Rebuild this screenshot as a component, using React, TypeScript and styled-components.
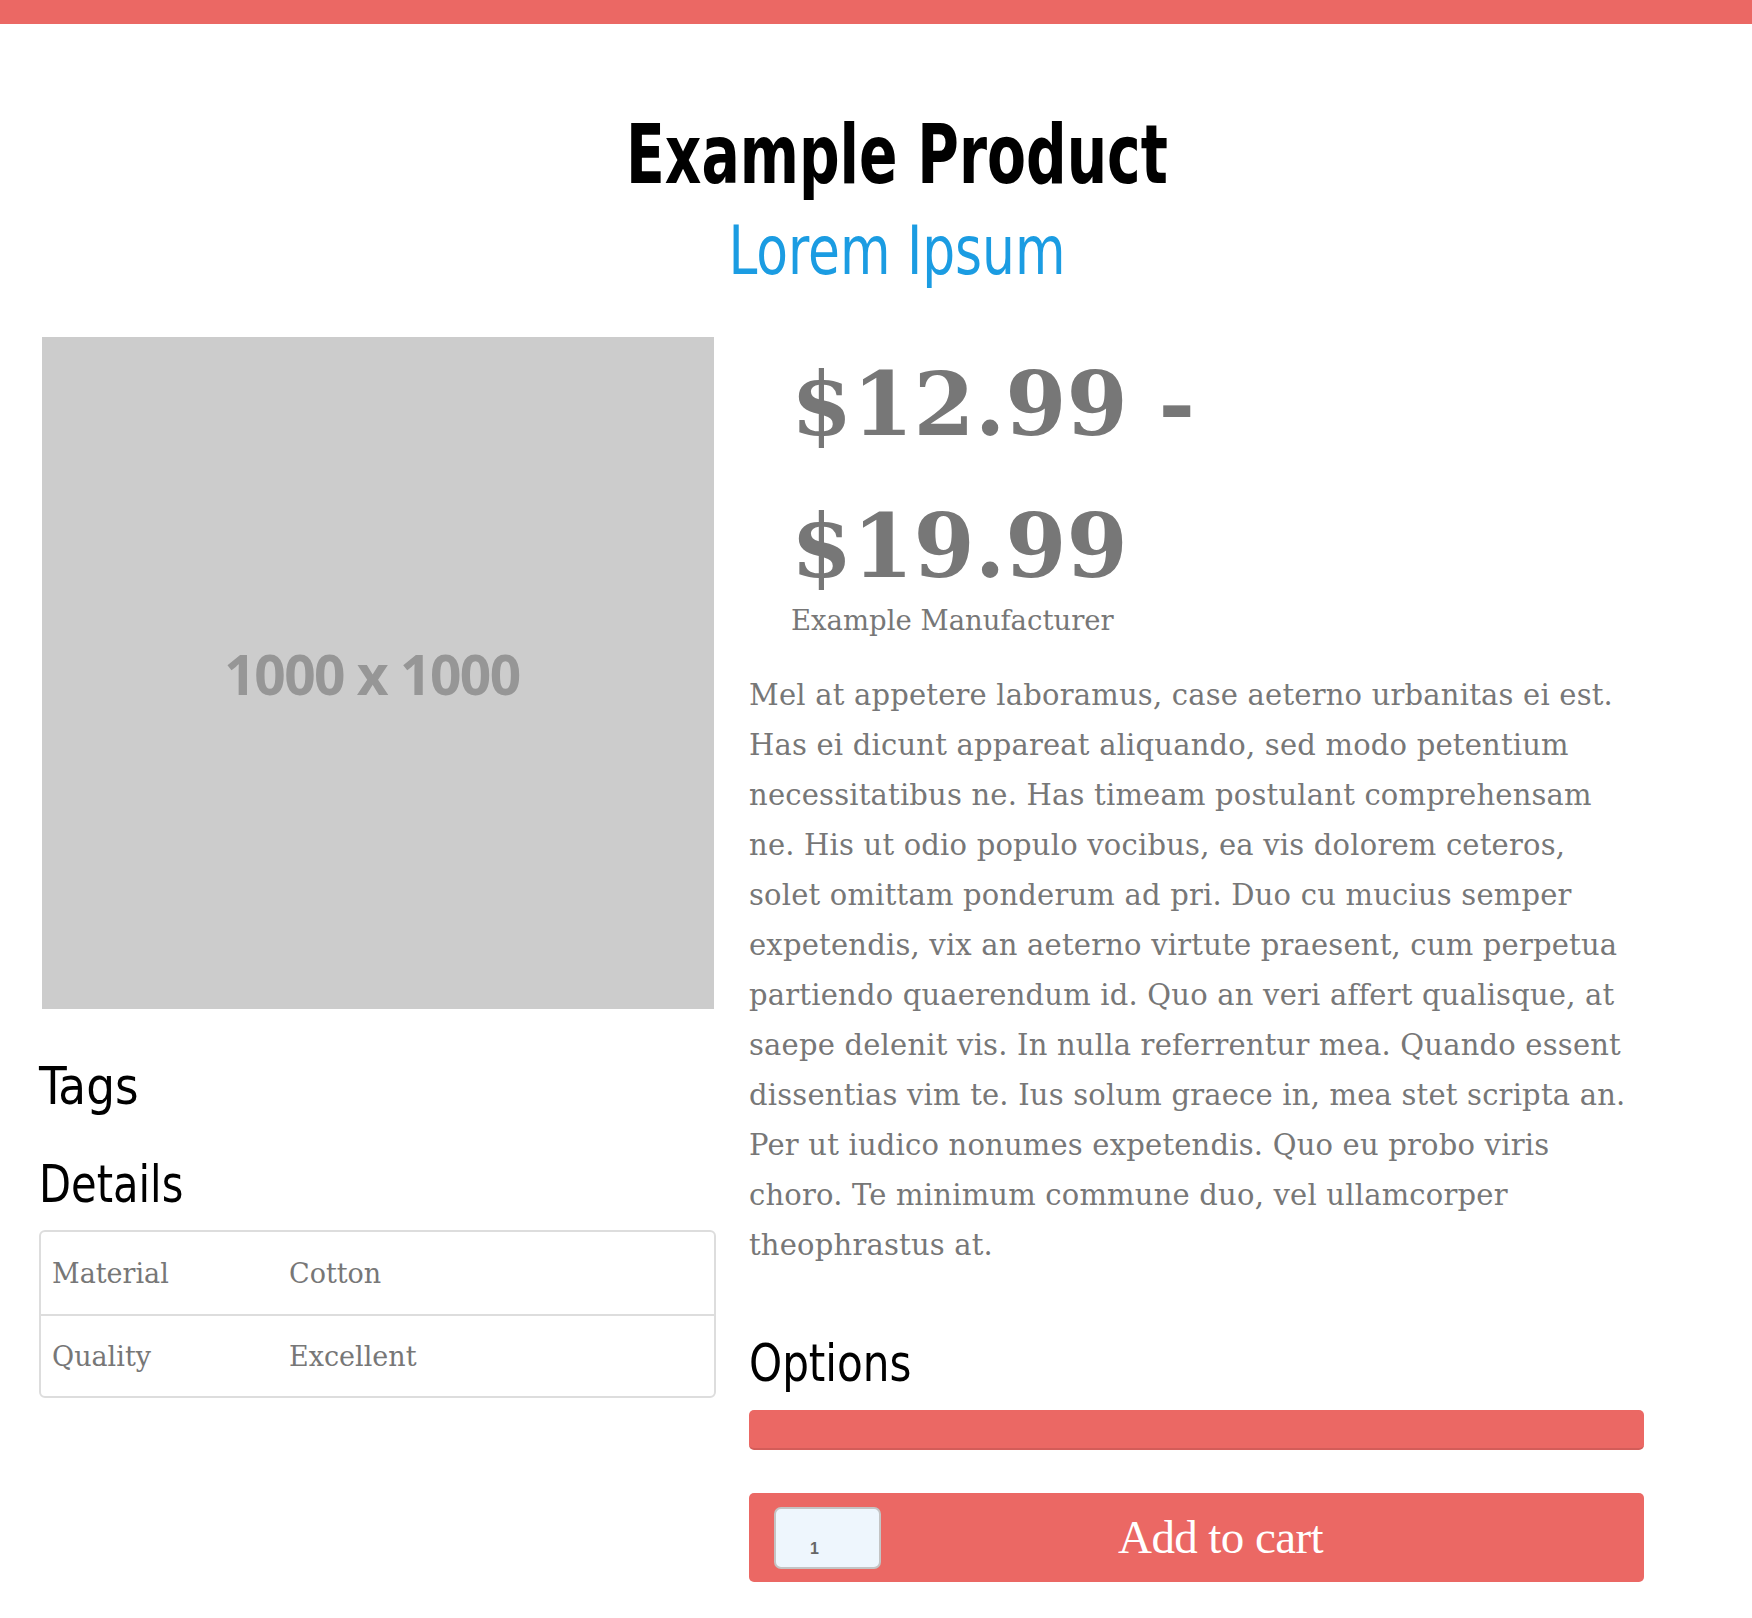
import React from "react";
import styled, { createGlobalStyle } from "styled-components";

const GlobalStyle = createGlobalStyle`
  html, body { margin: 0; padding: 0; background: #ffffff; }
  body { font-family: "DejaVu Serif", Georgia, serif; color: #777777; }
  * { box-sizing: border-box; }
`;

const headingFont = `"DejaVu Sans Condensed", "DejaVu Sans", sans-serif`;

const TopBar = styled.div`
  height: 24px;
  background: #eb6864;
`;

const Page = styled.main`
  padding: 90px 0 40px 39px;
`;

const Header = styled.header`
  padding-left: 3px;
  text-align: center;
`;

const Title = styled.h1`
  margin: 0;
  font-family: ${headingFont};
  font-stretch: condensed;
  font-weight: 700;
  font-size: 82px;
  line-height: 82px;
  color: #000000;
`;

const Subtitle = styled.h2`
  margin: 22px 0 0;
  font-family: ${headingFont};
  font-stretch: condensed;
  font-weight: 400;
  font-size: 67px;
  line-height: 67px;
  color: #1b9ce2;
`;

/* News Cycle is narrower than any installed sans: squeeze the glyphs horizontally */
const Narrow = styled.span<{ $sx: number; $origin?: string }>`
  display: inline-block;
  white-space: nowrap;
  transform: scaleX(${(p) => p.$sx});
  transform-origin: ${(p) => p.$origin ?? "center"};
`;

const Row = styled.div`
  display: flex;
  align-items: flex-start;
  gap: 33px;
  margin-top: 52px;
`;

const LeftCol = styled.section`
  width: 677px;
  display: flex;
  flex-direction: column;
`;

const RightCol = styled.section`
  width: 895px;
  display: flex;
  flex-direction: column;
`;

const Placeholder = styled.div`
  width: 672px;
  height: 672px;
  margin-left: 3px;
  background: #cccccc;
  display: flex;
  align-items: center;
  justify-content: center;
  font-family: "Open Sans", "Noto Sans", sans-serif;
  font-weight: 700;
  font-size: 55px;
  letter-spacing: -1.5px;
  color: #969696;
  padding-right: 12px;
`;

const SectionTitle = styled.h3<{ $mt: number }>`
  margin: ${(p) => p.$mt}px 0 0;
  font-family: ${headingFont};
  font-stretch: condensed;
  font-weight: 400;
  font-size: 52px;
  line-height: 52px;
  color: #000000;
`;

const DetailsTable = styled.div`
  margin-top: 20px;
  border: 2px solid #dddddd;
  border-radius: 6px;
`;

const DetailRow = styled.div<{ $first?: boolean }>`
  display: grid;
  grid-template-columns: 237px 1fr;
  align-items: center;
  height: 82px;
  padding-left: 11px;
  border-top: ${(p) => (p.$first ? "none" : "2px solid #dddddd")};
  font-size: 27px;
  color: #777777;
`;

const PriceBlock = styled.div`
  padding-left: 42px;
  margin-top: -4px;
`;

const Price = styled.h1`
  margin: 0;
  max-width: 520px;
  font-family: "DejaVu Serif", Georgia, serif;
  font-weight: 700;
  font-size: 88px;
  line-height: 142px;
  color: #777777;
`;

const Manufacturer = styled.div`
  margin-top: -10px;
  font-size: 27.5px;
  line-height: 27px;
  color: #777777;
`;

const Description = styled.p`
  margin: 36px 0 0;
  font-size: 29px;
  line-height: 50px;
  letter-spacing: 0.2px;
  color: #777777;
`;

const DescLine = styled.span`
  display: block;
  white-space: nowrap;
`;

const OptionsBar = styled.div`
  margin-top: 21px;
  height: 40px;
  background: #eb6864;
  border-radius: 5px;
  border-bottom: 2px solid #d35d59;
`;

const CartButton = styled.button`
  margin-top: 43px;
  height: 89px;
  width: 100%;
  display: flex;
  align-items: center;
  padding: 0 25px;
  background: #eb6864;
  border: none;
  border-radius: 5px;
  color: #ffffff;
  cursor: pointer;
`;

const QtyInput = styled.input`
  width: 107px;
  height: 62px;
  flex: none;
  padding: 23px 0 0 34px;
  background: #eef6fd;
  border: 2px solid #c4c4c4;
  border-radius: 7px;
  font-family: "Liberation Sans", Arial, sans-serif;
  font-size: 16px;
  font-weight: 700;
  color: #666666;
  outline: none;
`;

const CartLabel = styled.span`
  flex: 1;
  margin-right: 59px;
  text-align: center;
  font-family: "Liberation Serif", Georgia, serif;
  font-size: 47px;
  line-height: 47px;
  letter-spacing: -0.6px;
  color: #ffffff;
`;

const descriptionLines = [
  "Mel at appetere laboramus, case aeterno urbanitas ei est.",
  "Has ei dicunt appareat aliquando, sed modo petentium",
  "necessitatibus ne. Has timeam postulant comprehensam",
  "ne. His ut odio populo vocibus, ea vis dolorem ceteros,",
  "solet omittam ponderum ad pri. Duo cu mucius semper",
  "expetendis, vix an aeterno virtute praesent, cum perpetua",
  "partiendo quaerendum id. Quo an veri affert qualisque, at",
  "saepe delenit vis. In nulla referrentur mea. Quando essent",
  "dissentias vim te. Ius solum graece in, mea stet scripta an.",
  "Per ut iudico nonumes expetendis. Quo eu probo viris",
  "choro. Te minimum commune duo, vel ullamcorper",
  "theophrastus at.",
];

const details = [
  { label: "Material", value: "Cotton" },
  { label: "Quality", value: "Excellent" },
];

export default function App() {
  return (
    <>
      <GlobalStyle />
      <TopBar />
      <Page>
        <Header>
          <Title>
            <Narrow $sx={0.77}>Example Product</Narrow>
          </Title>
          <Subtitle>
            <Narrow $sx={0.86}>Lorem Ipsum</Narrow>
          </Subtitle>
        </Header>
        <Row>
          <LeftCol>
            <Placeholder>1000 x 1000</Placeholder>
            <SectionTitle $mt={51}>
              <Narrow $sx={0.97} $origin="left">Tags</Narrow>
            </SectionTitle>
            <SectionTitle $mt={46}>
              <Narrow $sx={0.89} $origin="left">Details</Narrow>
            </SectionTitle>
            <DetailsTable>
              {details.map((d, i) => (
                <DetailRow key={d.label} $first={i === 0}>
                  <span>{d.label}</span>
                  <span>{d.value}</span>
                </DetailRow>
              ))}
            </DetailsTable>
          </LeftCol>
          <RightCol>
            <PriceBlock>
              <Price>$12.99 - $19.99</Price>
              <Manufacturer>Example Manufacturer</Manufacturer>
            </PriceBlock>
            <Description>
              {descriptionLines.map((line) => (
                <DescLine key={line}>{line}</DescLine>
              ))}
            </Description>
            <SectionTitle $mt={67}>
              <Narrow $sx={0.9} $origin="left">Options</Narrow>
            </SectionTitle>
            <OptionsBar />
            <CartButton type="button">
              <QtyInput type="text" defaultValue="1" readOnly />
              <CartLabel>Add to cart</CartLabel>
            </CartButton>
          </RightCol>
        </Row>
      </Page>
    </>
  );
}
